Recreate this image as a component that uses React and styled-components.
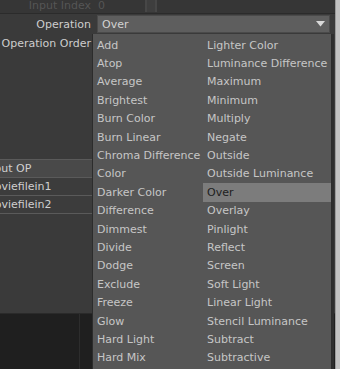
import React from "react";
import styled, { createGlobalStyle } from "styled-components";

const GlobalStyle = createGlobalStyle`
  html, body {
    margin: 0;
    padding: 0;
    background: #3a3a3a;
    overflow: hidden;
  }
  * { box-sizing: border-box; }
`;

const LEFT_OPS = [
  "Add", "Atop", "Average", "Brightest", "Burn Color", "Burn Linear",
  "Chroma Difference", "Color", "Darker Color", "Difference", "Dimmest",
  "Divide", "Dodge", "Exclude", "Freeze", "Glow", "Hard Light", "Hard Mix",
];

const RIGHT_OPS = [
  "Lighter Color", "Luminance Difference", "Maximum", "Minimum", "Multiply",
  "Negate", "Outside", "Outside Luminance", "Over", "Overlay", "Pinlight",
  "Reflect", "Screen", "Soft Light", "Linear Light", "Stencil Luminance",
  "Subtract", "Subtractive",
];

const INPUTS = [
  { name: "Input OP", header: true },
  { name: "moviefilein1" },
  { name: "moviefilein2" },
];

const Window = styled.div`
  width: 340px;
  height: 369px;
  display: flex;
  font-family: "DejaVu Sans", Verdana, sans-serif;
  font-size: 11px;
  overflow: hidden;
`;

const Panel = styled.div`
  position: relative;
  width: 335px;
  height: 100%;
  display: flex;
  flex-direction: column;
  background: #3a3a3a;
`;

const Frame = styled.div`
  flex: 1;
  background: #c2c2c2;
  border-left: 1px solid #9a9a9a;
`;

const TopRow = styled.div`
  height: 14px;
  display: grid;
  grid-template-columns: 91px 1fr;
  column-gap: 7px;
  align-items: start;
  line-height: 11px;
  color: #555555;
  background: #363636;
  border-bottom: 1px solid #2b2b2b;
`;

const FadedLabel = styled.span`
  text-align: right;
`;

const FadedValue = styled.div`
  display: flex;
  align-items: flex-start;
  gap: 40px;
`;

const SliderKnob = styled.div`
  width: 12px;
  height: 12px;
  border-left: 2px solid #474747;
  border-right: 2px solid #474747;
  background: #3e3e3e;
`;

const ParamRow = styled.div`
  height: ${({ $h }) => $h}px;
  margin-top: ${({ $top }) => $top || 0}px;
  display: grid;
  grid-template-columns: 91px 1fr;
  column-gap: 6px;
  align-items: center;
  padding-right: 5px;
`;

const Label = styled.span`
  text-align: right;
  color: #cdcdcd;
  white-space: nowrap;
`;

const Dropdown = styled.div`
  height: 100%;
  display: flex;
  align-items: center;
  justify-content: space-between;
  padding: 0 4px 0 4px;
  background: #5e5e5e;
  border: 1px solid #4a4a4a;
  color: #d2d2d2;
`;

const Arrow = styled.svg`
  width: 9px;
  height: 6px;
  display: block;
`;

const InputList = styled.div`
  margin-top: 105px;
  margin-left: -17px;
  width: 109px;
  display: flex;
  flex-direction: column;
  border-bottom: 1px solid #5a5a5a;
`;

const InputRow = styled.div`
  height: 18px;
  display: flex;
  align-items: center;
  padding-left: 1px;
  border-top: 1px solid #5a5a5a;
  background: ${({ $header }) => ($header ? "#494949" : "#3c3c3c")};
  color: #cfcfcf;
  white-space: nowrap;
`;

const Filler = styled.div`
  flex: 1;
`;

const Viewer = styled.div`
  height: 56px;
  display: flex;
  background: #1f1f1f;
  border-top: 1px solid #2a2a2a;
`;

const ViewerPane = styled.div`
  width: 80px;
  border-right: 1px solid #2d2d2d;
`;

const Menu = styled.div`
  position: absolute;
  top: 34px;
  left: 92px;
  width: 240px;
  bottom: 0;
  padding-top: 2px;
  display: grid;
  grid-template-columns: 110px 1fr;
  grid-template-rows: repeat(18, 18.4px);
  grid-auto-flow: column;
  background: #565656;
  border-left: 1px solid #2c2c2c;
  border-right: 1px solid #2c2c2c;
  box-shadow: 2px 0 0 #2e2e2e;
`;

const MenuItem = styled.div`
  display: flex;
  align-items: center;
  padding-left: 4px;
  white-space: nowrap;
  color: ${({ $active }) => ($active ? "#1e1e1e" : "#c6c6c6")};
  background: ${({ $active }) => ($active ? "#7c7c7c" : "transparent")};
`;

export default function App() {
  const current = "Over";
  return (
    <>
      <GlobalStyle />
      <Window>
        <Panel>
          <TopRow>
            <FadedLabel>Input Index</FadedLabel>
            <FadedValue>
              <span>0</span>
              <SliderKnob />
            </FadedValue>
          </TopRow>
          <ParamRow $h={18} $top={1}>
            <Label>Operation</Label>
            <Dropdown>
              <span>{current}</span>
              <Arrow viewBox="0 0 9 6">
                <path d="M0 0 H9 L4.5 5.5 Z" fill="#d8d8d8" />
              </Arrow>
            </Dropdown>
          </ParamRow>
          <ParamRow $h={21}>
            <Label>Operation Order</Label>
          </ParamRow>
          <InputList>
            {INPUTS.map((inp) => (
              <InputRow key={inp.name} $header={inp.header}>
                {inp.name}
              </InputRow>
            ))}
          </InputList>
          <Filler />
          <Viewer>
            <ViewerPane />
          </Viewer>
          <Menu>
            {[...LEFT_OPS, ...RIGHT_OPS].map((op) => (
              <MenuItem key={op} $active={op === current}>
                {op}
              </MenuItem>
            ))}
          </Menu>
        </Panel>
        <Frame />
      </Window>
    </>
  );
}
